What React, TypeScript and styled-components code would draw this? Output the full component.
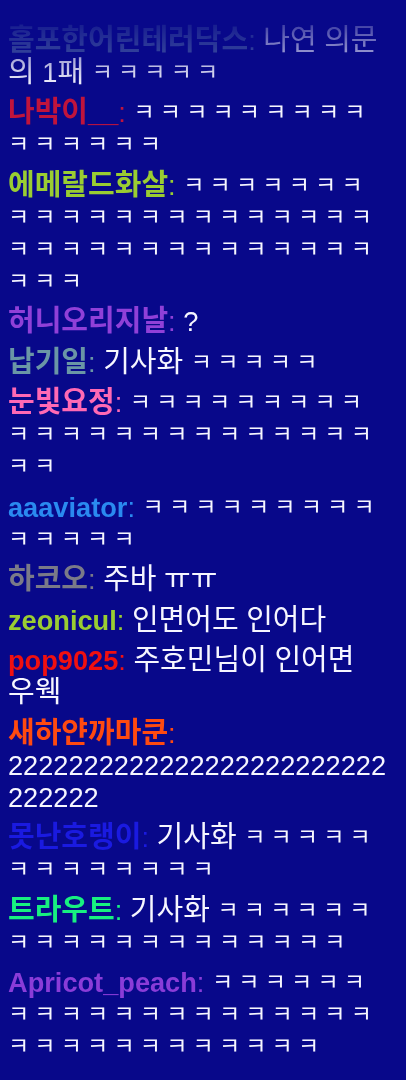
import React from "react";
import styled, { createGlobalStyle } from "styled-components";

const GlobalStyle = createGlobalStyle`
  html, body {
    margin: 0;
    padding: 0;
    background: #08088a;
  }
  #root {
    width: 406px;
  }
`;

const Overlay = styled.div`
  box-sizing: border-box;
  width: 406px;
  height: 1080px;
  overflow: hidden;
  display: flex;
  flex-direction: column;
  justify-content: flex-end;
  gap: 8.5px;
  padding: 0 18.5px 17px 8px;
  font-family: "Liberation Sans", "Noto Sans CJK KR", sans-serif;
  font-size: 27.2px;
  line-height: 32px;
  color: #f6f6ff;
  -webkit-mask-image: linear-gradient(to bottom, transparent 6px, #000 86px);
  mask-image: linear-gradient(to bottom, transparent 6px, #000 86px);
`;

const Line = styled.div`
  overflow-wrap: break-word;
  word-break: normal;
`;

const Name = styled.span<{ $color: string }>`
  color: ${(p) => p.$color};
  font-weight: 700;
`;

const Colon = styled.span<{ $color: string }>`
  color: ${(p) => p.$color};
  font-weight: 400;
`;

const Body = styled.span`
  color: #f6f6ff;
`;

/* Hangul is set a little larger than Latin, as the overlay's font does */
const Hangul = styled.span`
  font-family: "Noto Sans CJK KR", sans-serif;
  font-size: 29px;
  line-height: 24px;
`;

/* the ㅋ jamo: small glyphs on a full syllable pitch */
const Laugh = styled.span`
  font-family: "Noto Sans CJK KR", sans-serif;
  font-size: 23px;
  line-height: 20px;
  letter-spacing: 5.2px;
  vertical-align: 2px;
`;

const SPLIT = /(ㅋ+|[\u1100-\u11FF\u3130-\u314A\u314C-\u318F\uAC00-\uD7A3]+)/;
const IS_LAUGH = /^ㅋ+$/;
const IS_HANGUL = /^[\u1100-\u11FF\u3130-\u314A\u314C-\u318F\uAC00-\uD7A3]+$/;

function Scripted({ text }: { text: string }) {
  return (
    <>
      {text.split(SPLIT).map((part, i) => {
        if (IS_LAUGH.test(part)) return <Laugh key={i}>{part}</Laugh>;
        if (IS_HANGUL.test(part)) return <Hangul key={i}>{part}</Hangul>;
        return <React.Fragment key={i}>{part}</React.Fragment>;
      })}
    </>
  );
}

const k = (n: number) => "ㅋ".repeat(n);

const messages: { name: string; color: string; text: string }[] = [
  { name: "홀포한어린테러닥스", color: "#4f68a6", text: `나연 의문의 1패 ${k(5)}` },
  { name: "나박이__", color: "#c0143c", text: k(15) },
  { name: "에메랄드화살", color: "#9acd32", text: k(38) },
  { name: "허니오리지날", color: "#9040d8", text: "?" },
  { name: "납기일", color: "#6a96a6", text: `기사화 ${k(5)}` },
  { name: "눈빛요정", color: "#ff69b4", text: k(25) },
  { name: "aaaviator", color: "#2a8af0", text: k(14) },
  { name: "하코오", color: "#7a7a88", text: "주바 ㅠㅠ" },
  { name: "zeonicul", color: "#9acd32", text: "인면어도 인어다" },
  { name: "pop9025", color: "#f01010", text: "주호민님이 인어면 우웩" },
  { name: "새하얀까마쿤", color: "#ff4a10", text: "2".repeat(31) },
  { name: "못난호랭이", color: "#1a1ae0", text: `기사화 ${k(13)}` },
  { name: "트라우트", color: "#18f080", text: `기사화 ${k(19)}` },
  { name: "Apricot_peach", color: "#8a3cd8", text: k(32) },
];

export default function App() {
  return (
    <>
      <GlobalStyle />
      <Overlay>
        {messages.map((m, i) => (
          <Line key={i}>
            <Name $color={m.color}>
              <Scripted text={m.name} />
            </Name>
            <Colon $color={m.color}>:</Colon>{" "}
            <Body>
              <Scripted text={m.text} />
            </Body>
          </Line>
        ))}
      </Overlay>
    </>
  );
}
